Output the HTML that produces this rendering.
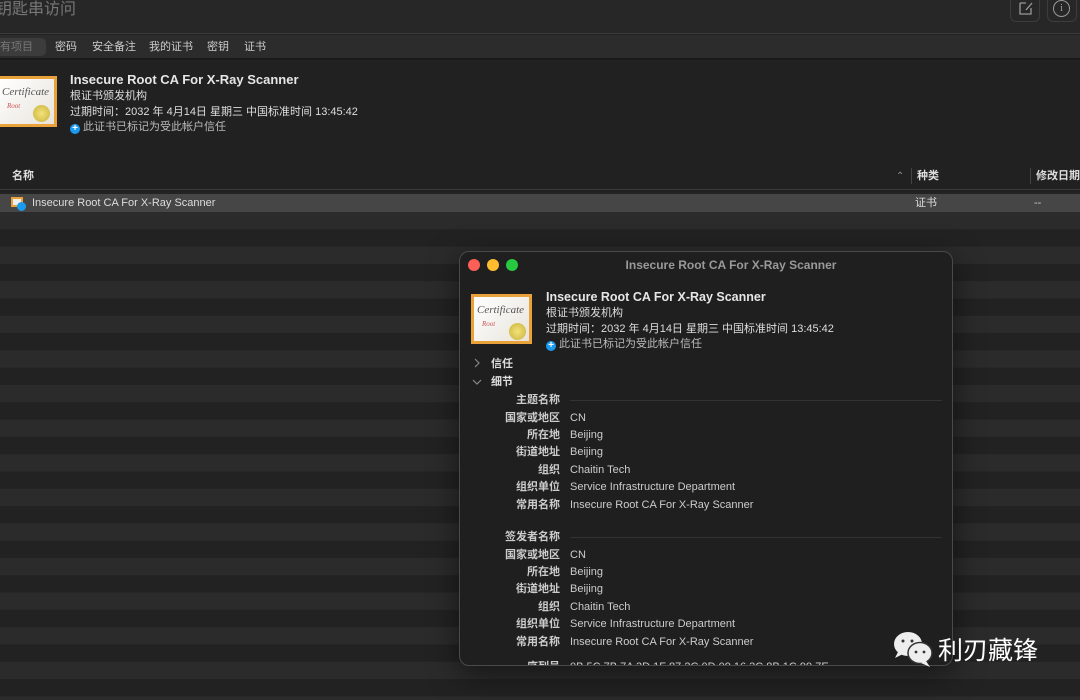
<!DOCTYPE html>
<html><head><meta charset="utf-8"><style>
*{margin:0;padding:0;box-sizing:border-box}
body{width:1080px;height:700px;overflow:hidden;background:#232323;font-family:"Liberation Sans","Noto Sans CJK SC",sans-serif;color:#ddd;position:relative;font-size:11px;line-height:14px}
.abs{position:absolute}
.stripes{position:absolute;left:0;top:212px;width:1080px;height:488px;background-image:linear-gradient(#2b2b2b 50%,#222 50%);background-size:100% 34.6px}
.cert{position:absolute;background:#e9a23a;padding:3px}
.cert div{width:100%;height:100%;background:linear-gradient(135deg,#fff,#e8e4dc);position:relative;font-family:"Liberation Serif",serif;font-style:italic;color:#555}
.seal{position:absolute;border-radius:50%;background:radial-gradient(#f2e27a,#c9b23a)}
.plus{display:inline-block;width:10px;height:10px;border-radius:50%;background:#1a9bf0;color:#fff;font-size:10px;line-height:10px;text-align:center;font-weight:bold;vertical-align:-1px;margin-right:3px}
.lbl{position:absolute;width:100px;text-align:right;font-weight:bold;color:#ccc;line-height:14px}
.val{position:absolute;left:110px;color:#ccc;line-height:14px}
</style></head><body>
<div class="abs" style="left:0;top:0;width:1080px;height:34px;background:#272727;border-bottom:1px solid #3a3a3a"></div>
<div class="abs" style="left:-4px;top:0;font-size:16px;line-height:20px;color:#777">钥匙串访问</div>
<div class="abs" style="left:1010px;top:-4px;width:30px;height:26px;border:1px solid #3d3d3d;border-radius:6px;"></div>
<svg class="abs" style="left:1017px;top:0" width="16" height="16"><path d="M3 3h6M3 3v11h11v-6M9 10l6-7" stroke="#999" fill="none" stroke-width="1.3"/></svg>
<div class="abs" style="left:1047px;top:-4px;width:30px;height:26px;border:1px solid #3d3d3d;border-radius:6px"></div>
<div class="abs" style="left:1053px;top:0;width:17px;height:17px;border:1.3px solid #999;border-radius:50%;color:#999;text-align:center;font-size:11px;line-height:15px;font-family:'Liberation Serif',serif">i</div>
<div class="abs" style="left:0;top:35px;width:1080px;height:25px;background:#2c2c2c;border-bottom:2px solid #1a1a1a"></div>
<div class="abs" style="left:-6px;top:38px;width:52px;height:18px;background:#3c3c3c;border-radius:5px"></div>
<div class="abs" style="left:0;top:40px;color:#777">有项目</div>
<div class="abs" style="left:55px;top:40px;color:#ccc">密码</div>
<div class="abs" style="left:92px;top:40px;color:#ccc">安全备注</div>
<div class="abs" style="left:149px;top:40px;color:#ccc">我的证书</div>
<div class="abs" style="left:207px;top:40px;color:#ccc">密钥</div>
<div class="abs" style="left:244px;top:40px;color:#ccc">证书</div>
<div class="abs" style="left:0;top:62px;width:1080px;height:130px;background:#212121"></div>
<div class="cert" style="left:-4px;top:76px;width:61px;height:51px"><div><span style="position:absolute;left:3px;top:6px;font-size:11px">Certificate</span><span style="position:absolute;left:8px;top:20px;font-size:7px;color:#c55">Root</span><span class="seal" style="left:34px;top:26px;width:17px;height:17px"></span></div></div>
<div class="abs" style="left:70px;top:73px;font-size:13px;font-weight:bold;color:#e6e6e6">Insecure Root CA For X-Ray Scanner</div>
<div class="abs" style="left:70px;top:89px;color:#ddd">根证书颁发机构</div>
<div class="abs" style="left:70px;top:105px;color:#ddd">过期时间：2032 年 4月14日 星期三 中国标准时间 13:45:42</div>
<div class="abs" style="left:70px;top:120px;color:#bbb"><span class="plus">+</span>此证书已标记为受此帐户信任</div>
<div class="abs" style="left:12px;top:169px;font-weight:bold;color:#ddd">名称</div>
<div class="abs" style="left:896px;top:170px;color:#888;font-size:10px">⌃</div>
<div class="abs" style="left:911px;top:168px;width:1px;height:16px;background:#444"></div>
<div class="abs" style="left:917px;top:169px;font-weight:bold;color:#ddd">种类</div>
<div class="abs" style="left:1030px;top:168px;width:1px;height:16px;background:#444"></div>
<div class="abs" style="left:1036px;top:169px;font-weight:bold;color:#ddd">修改日期</div>
<div class="abs" style="left:0;top:189px;width:1080px;height:1px;background:#3a3a3a"></div>
<div class="abs" style="left:0;top:194px;width:1080px;height:18px;background:#464646"></div>
<div class="abs" style="left:11px;top:197px;width:12px;height:10px;background:#e9a23a;border:2px solid #e9a23a"><div style="background:#eee;width:100%;height:100%"></div></div>
<div class="abs" style="left:17px;top:202px;width:9px;height:9px;border-radius:50%;background:#1a9bf0"></div>
<div class="abs" style="left:32px;top:196px;color:#ddd">Insecure Root CA For X-Ray Scanner</div>
<div class="abs" style="left:915px;top:196px;color:#ddd">证书</div>
<div class="abs" style="left:1034px;top:196px;color:#ccc">--</div>
<div class="stripes"></div>

<div class="abs" style="left:459px;top:251px;width:494px;height:415px;background:#1f1f1f;border:1px solid #4a4a4a;border-radius:10px;overflow:hidden;box-shadow:0 8px 30px rgba(0,0,0,.5)">
<div class="abs" style="left:8px;top:7px;width:12px;height:12px;border-radius:50%;background:#fe5f57"></div>
<div class="abs" style="left:27px;top:7px;width:12px;height:12px;border-radius:50%;background:#febc2e"></div>
<div class="abs" style="left:46px;top:7px;width:12px;height:12px;border-radius:50%;background:#28c840"></div>
<div class="abs" style="left:0;top:6px;width:494px;text-align:center;font-size:12px;font-weight:bold;color:#999;padding-left:48px">Insecure Root CA For X-Ray Scanner</div>
<div class="cert" style="left:11px;top:42px;width:61px;height:50px"><div><span style="position:absolute;left:3px;top:6px;font-size:11px">Certificate</span><span style="position:absolute;left:8px;top:20px;font-size:7px;color:#c55">Root</span><span class="seal" style="left:35px;top:26px;width:17px;height:17px"></span></div></div>
<div class="abs" style="left:86px;top:38px;font-size:12.5px;font-weight:bold;color:#e6e6e6">Insecure Root CA For X-Ray Scanner</div>
<div class="abs" style="left:86px;top:54px;color:#ddd">根证书颁发机构</div>
<div class="abs" style="left:86px;top:70px;color:#ddd">过期时间：2032 年 4月14日 星期三 中国标准时间 13:45:42</div>
<div class="abs" style="left:86px;top:85px;color:#bbb"><span class="plus">+</span>此证书已标记为受此帐户信任</div>
<svg class="abs" style="left:13px;top:106px" width="8" height="10"><path d="M2 1l4 4-4 4" stroke="#888" fill="none" stroke-width="1.2"/></svg>
<div class="abs" style="left:31px;top:105px;font-weight:bold;color:#ddd">信任</div>
<svg class="abs" style="left:12px;top:126px" width="10" height="8"><path d="M1 2l4 4 4-4" stroke="#888" fill="none" stroke-width="1.2"/></svg>
<div class="abs" style="left:31px;top:123px;font-weight:bold;color:#ddd">细节</div>
<div class="abs" style="left:0;top:141px;width:494px">
<div class="lbl" style="top:0">主题名称</div><div class="abs" style="left:110px;top:7px;width:372px;height:1px;background:#333"></div>
<div class="lbl" style="top:18px">国家或地区</div><div class="val" style="top:18px">CN</div>
<div class="lbl" style="top:35px">所在地</div><div class="val" style="top:35px">Beijing</div>
<div class="lbl" style="top:52px">街道地址</div><div class="val" style="top:52px">Beijing</div>
<div class="lbl" style="top:70px">组织</div><div class="val" style="top:70px">Chaitin Tech</div>
<div class="lbl" style="top:87px">组织单位</div><div class="val" style="top:87px">Service Infrastructure Department</div>
<div class="lbl" style="top:105px">常用名称</div><div class="val" style="top:105px">Insecure Root CA For X-Ray Scanner</div>
</div>
<div class="abs" style="left:0;top:278px;width:494px">
<div class="lbl" style="top:0">签发者名称</div><div class="abs" style="left:110px;top:7px;width:372px;height:1px;background:#333"></div>
<div class="lbl" style="top:18px">国家或地区</div><div class="val" style="top:18px">CN</div>
<div class="lbl" style="top:35px">所在地</div><div class="val" style="top:35px">Beijing</div>
<div class="lbl" style="top:52px">街道地址</div><div class="val" style="top:52px">Beijing</div>
<div class="lbl" style="top:70px">组织</div><div class="val" style="top:70px">Chaitin Tech</div>
<div class="lbl" style="top:87px">组织单位</div><div class="val" style="top:87px">Service Infrastructure Department</div>
<div class="lbl" style="top:105px">常用名称</div><div class="val" style="top:105px">Insecure Root CA For X-Ray Scanner</div>
<div class="lbl" style="top:130px">序列号</div><div class="val" style="top:130px">0B 5C 7B 7A 3D 1F 87 2C 0D 09 16 3C 8B 1C 99 7E</div>
</div>
</div>

<svg class="abs" style="left:892px;top:630px" width="44" height="38" viewBox="0 0 44 38">
<ellipse cx="16" cy="14" rx="14" ry="12" fill="#eee"/><path d="M6 22l-3 6 8-4z" fill="#eee"/>
<ellipse cx="28" cy="23" rx="12" ry="10.5" fill="#eee" stroke="#333" stroke-width="1.5"/><path d="M34 31l4 6-9-4z" fill="#eee"/>
<circle cx="11" cy="11" r="1.5" fill="#333"/><circle cx="20" cy="11" r="1.5" fill="#333"/><circle cx="24" cy="22" r="1.4" fill="#333"/><circle cx="32" cy="22" r="1.4" fill="#333"/></svg>
<div class="abs" style="left:938px;top:636px;font-size:25px;line-height:30px;color:#fff">利刃藏锋</div>
</body></html>
